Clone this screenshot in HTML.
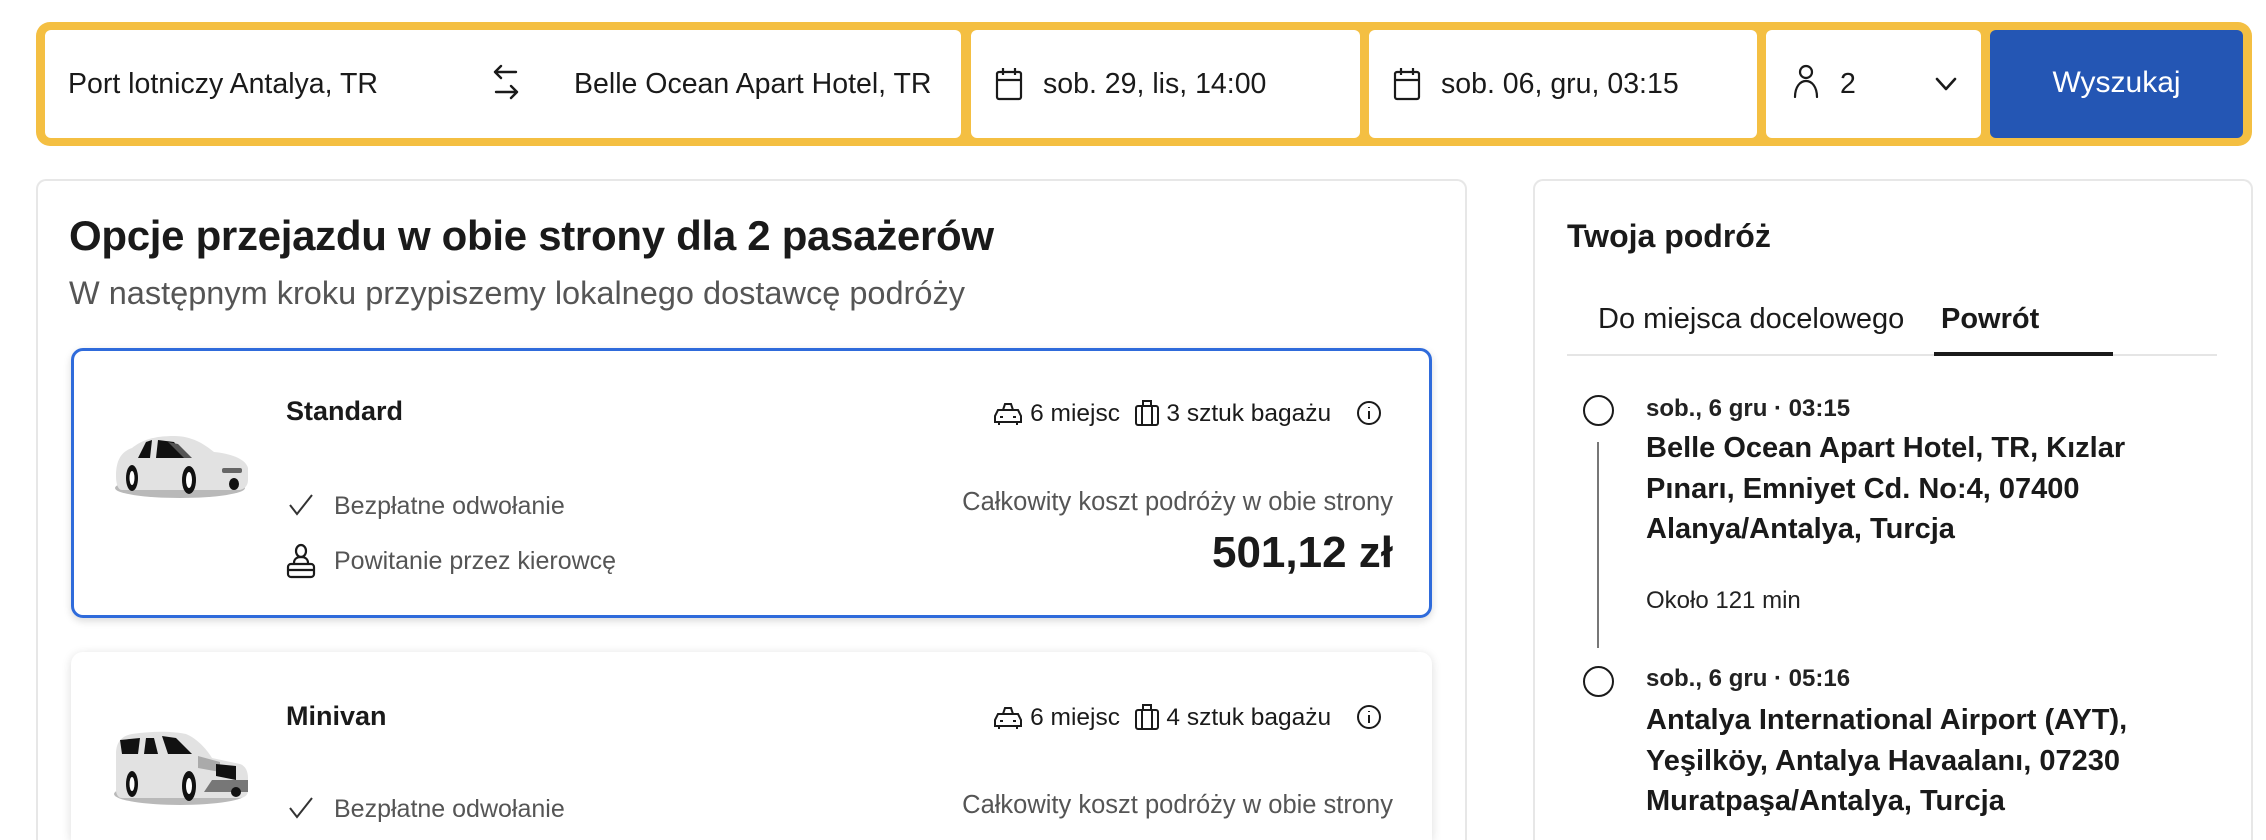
<!DOCTYPE html>
<html style="width:2266px;height:840px;overflow:hidden"><head><meta charset="utf-8"><style>
*{box-sizing:border-box;margin:0;padding:0}
body{width:2266px;height:840px;overflow:hidden;background:#fff;font-family:"Liberation Sans",Arial,sans-serif;color:#1a1a1a;position:relative}
.abs{position:absolute}
.bar{left:36px;top:22px;width:2216px;height:124px;background:#f4bf42;border-radius:14px}
.seg{position:absolute;top:8px;height:108px;background:#fff;border-radius:6px}
.t26{font-size:28.5px;line-height:32px;white-space:nowrap}
.card{border:2px solid #e7e7e7;border-bottom:none;border-radius:10px 10px 0 0}
.gray{color:#555}
.b{font-weight:bold}
</style></head><body>
<div class="abs bar">
  <div class="seg" style="left:9px;width:916px"></div>
  <div class="seg" style="left:935px;width:389px"></div>
  <div class="seg" style="left:1333px;width:388px"></div>
  <div class="seg" style="left:1730px;width:215px"></div>
  <div class="seg" style="left:1954px;width:253px;background:#2456b4"></div>
</div>
<div class="abs t26" style="left:68px;top:68px">Port lotniczy Antalya, TR</div>
<svg class="abs" style="left:490px;top:62px" width="32" height="42" viewBox="0 0 32 42" fill="none" stroke="#1a1a1a" stroke-width="2.4" stroke-linecap="round" stroke-linejoin="round"><path d="M26 10H5M11 4L5 10l6 6M6 30h21M21 24l6 6-6 6"/></svg>
<div class="abs t26" style="left:574px;top:68px">Belle Ocean Apart Hotel, TR</div>
<svg class="abs" style="left:995px;top:67px" width="28" height="34" viewBox="0 0 28 34" fill="none" stroke="#1a1a1a" stroke-width="2.2"><rect x="2" y="5" width="24" height="27" rx="2"/><path d="M2 13h24M8 1v7M20 1v7"/></svg>
<div class="abs t26" style="left:1043px;top:68px">sob. 29, lis, 14:00</div>
<svg class="abs" style="left:1393px;top:67px" width="28" height="34" viewBox="0 0 28 34" fill="none" stroke="#1a1a1a" stroke-width="2.2"><rect x="2" y="5" width="24" height="27" rx="2"/><path d="M2 13h24M8 1v7M20 1v7"/></svg>
<div class="abs t26" style="left:1441px;top:68px">sob. 06, gru, 03:15</div>
<svg class="abs" style="left:1792px;top:64px" width="28" height="34" viewBox="0 0 28 34" fill="none" stroke="#1a1a1a" stroke-width="2.2" stroke-linecap="round"><circle cx="14" cy="8" r="6"/><path d="M3 33c0-10 5-16 11-16s11 6 11 16"/></svg>
<div class="abs t26" style="left:1840px;top:68px">2</div>
<svg class="abs" style="left:1934px;top:76px" width="24" height="16" viewBox="0 0 24 16" fill="none" stroke="#1a1a1a" stroke-width="2.6" stroke-linecap="round" stroke-linejoin="round"><path d="M3 3l9 10 9-10"/></svg>
<div class="abs" style="left:1990px;top:66px;width:253px;text-align:center;color:#fff;font-size:30px">Wyszukaj</div>

<!-- left card -->
<div class="abs card" style="left:36px;top:179px;width:1431px;height:661px"></div>
<div class="abs b" style="left:69px;top:212px;font-size:42px;letter-spacing:-0.3px;white-space:nowrap">Opcje przejazdu w obie strony dla 2 pasażerów</div>
<div class="abs gray" style="left:69px;top:275px;font-size:32.5px;white-space:nowrap">W następnym kroku przypiszemy lokalnego dostawcę podróży</div>

<div class="abs" style="left:71px;top:348px;width:1361px;height:270px;border:3px solid #2f6bdb;border-radius:12px;box-shadow:0 3px 8px rgba(0,0,0,.15)"></div>
<div class="abs" style="left:71px;top:652px;width:1361px;height:188px;border-radius:12px 12px 0 0;box-shadow:0 2px 10px rgba(0,0,0,.14)"></div>

<!-- sedan -->
<svg class="abs" style="left:112px;top:428px" width="140" height="70" viewBox="0 0 140 70"><ellipse cx="68" cy="60" rx="65" ry="10" fill="#b9b9b9"/><path d="M4 48c0-14 4-24 16-28 10-8 22-12 42-12 18 0 30 8 40 16 20 2 32 8 34 16v12c0 6-4 10-10 10H10c-4 0-6-6-6-14z" fill="#e2e2e2"/><path d="M34 14l-8 16h12l2-18zM46 12l-2 18h30l-12-16z" fill="#111"/><path d="M56 14l16 16h8L66 16z" fill="#555"/><rect x="110" y="40" width="20" height="5" rx="2" fill="#666"/><ellipse cx="20" cy="50" rx="6" ry="13" fill="#111"/><ellipse cx="20" cy="50" rx="2.5" ry="7" fill="#fff"/><ellipse cx="77" cy="52" rx="7" ry="14" fill="#111"/><ellipse cx="77" cy="52" rx="3" ry="8" fill="#fff"/><ellipse cx="122" cy="56" rx="5" ry="6" fill="#111"/></svg>
<!-- minivan -->
<svg class="abs" style="left:112px;top:728px" width="140" height="78" viewBox="0 0 140 78"><ellipse cx="68" cy="66" rx="66" ry="11" fill="#b9b9b9"/><path d="M4 60V26c0-10 4-18 16-20 20-3 40-3 54 0 10 4 20 14 26 24l28 6c6 2 8 8 8 14v12c0 6-4 8-10 8H10c-4 0-6-4-6-8z" fill="#e2e2e2"/><path d="M8 12l2 14h16l2-16zM34 10l-2 16h14l-4-16zM50 8l6 18h24L64 10z" fill="#111"/><path d="M86 28l22 6v10l-22-4z" fill="#aaa"/><path d="M104 36l20 2v14l-20-4z" fill="#111"/><path d="M92 64l8-12h36v12z" fill="#777"/><ellipse cx="20" cy="56" rx="6" ry="13" fill="#111"/><ellipse cx="20" cy="56" rx="2.5" ry="7" fill="#fff"/><ellipse cx="77" cy="58" rx="7" ry="15" fill="#111"/><ellipse cx="77" cy="58" rx="3" ry="8" fill="#fff"/><ellipse cx="124" cy="64" rx="5" ry="5" fill="#111"/></svg>

<div class="abs b" style="left:286px;top:396px;font-size:27px">Standard</div>
<div class="abs b" style="left:286px;top:701px;font-size:27px">Minivan</div>

<!-- seats / luggage rows -->
<div class="abs" style="right:884px;top:399px;font-size:24.5px;line-height:28px;white-space:nowrap">
<svg width="30" height="26" viewBox="0 0 30 26" style="vertical-align:-5px" fill="none" stroke="#1a1a1a" stroke-width="2"><path d="M12 4h6l2 6H10zM5 10h20l3 6v6H2v-6zM6 22v3M24 22v3M7 17h3M20 17h3"/></svg> 6 miejsc&nbsp;
<svg width="26" height="28" viewBox="0 0 26 28" style="vertical-align:-6px" fill="none" stroke="#1a1a1a" stroke-width="2"><rect x="2" y="7" width="22" height="19" rx="2"/><path d="M9 7V2h8v5M8 7v19M18 7v19"/></svg> 3 sztuk bagażu
<svg width="26" height="26" viewBox="0 0 26 26" style="vertical-align:-5px;margin-left:18px" fill="none" stroke="#1a1a1a" stroke-width="2"><circle cx="13" cy="13" r="11"/><path d="M13 11v8M13 7v1"/></svg>
</div>
<div class="abs" style="right:884px;top:703px;font-size:24.5px;line-height:28px;white-space:nowrap">
<svg width="30" height="26" viewBox="0 0 30 26" style="vertical-align:-5px" fill="none" stroke="#1a1a1a" stroke-width="2"><path d="M12 4h6l2 6H10zM5 10h20l3 6v6H2v-6zM6 22v3M24 22v3M7 17h3M20 17h3"/></svg> 6 miejsc&nbsp;
<svg width="26" height="28" viewBox="0 0 26 28" style="vertical-align:-6px" fill="none" stroke="#1a1a1a" stroke-width="2"><rect x="2" y="7" width="22" height="19" rx="2"/><path d="M9 7V2h8v5M8 7v19M18 7v19"/></svg> 4 sztuk bagażu
<svg width="26" height="26" viewBox="0 0 26 26" style="vertical-align:-5px;margin-left:18px" fill="none" stroke="#1a1a1a" stroke-width="2"><circle cx="13" cy="13" r="11"/><path d="M13 11v8M13 7v1"/></svg>
</div>

<svg class="abs" style="left:288px;top:493px" width="26" height="24" viewBox="0 0 26 24" fill="none" stroke="#333" stroke-width="2"><path d="M2 12l7 9L24 2"/></svg>
<div class="abs gray" style="left:334px;top:492px;font-size:25px">Bezpłatne odwołanie</div>
<svg class="abs" style="left:286px;top:543px" width="30" height="36" viewBox="0 0 30 36" fill="none" stroke="#1a1a1a" stroke-width="2.2"><ellipse cx="15" cy="8" rx="5" ry="6"/><path d="M8 20c0-4 3-6 7-6s7 2 7 6"/><rect x="2" y="21" width="26" height="13" rx="3"/><path d="M2 27h26"/></svg>
<div class="abs gray" style="left:334px;top:547px;font-size:25px">Powitanie przez kierowcę</div>
<svg class="abs" style="left:288px;top:796px" width="26" height="24" viewBox="0 0 26 24" fill="none" stroke="#333" stroke-width="2"><path d="M2 12l7 9L24 2"/></svg>
<div class="abs gray" style="left:334px;top:795px;font-size:25px">Bezpłatne odwołanie</div>

<div class="abs gray" style="right:873px;top:488px;font-size:25.5px;white-space:nowrap">Całkowity koszt podróży w obie strony</div>
<div class="abs b" style="right:873px;top:528px;font-size:44px">501,12 zł</div>
<div class="abs gray" style="right:873px;top:791px;font-size:25.5px;white-space:nowrap">Całkowity koszt podróży w obie strony</div>

<!-- right card -->
<div class="abs card" style="left:1533px;top:179px;width:720px;height:661px"></div>
<div class="abs b" style="left:1567px;top:218px;font-size:32px">Twoja podróż</div>
<div class="abs" style="left:1598px;top:303px;font-size:29px;white-space:nowrap">Do miejsca docelowego</div>
<div class="abs b" style="left:1941px;top:303px;font-size:29px">Powrót</div>
<div class="abs" style="left:1567px;top:354px;width:650px;height:2px;background:#e5e5e5"></div>
<div class="abs" style="left:1934px;top:352px;width:179px;height:4px;background:#1a1a1a"></div>

<div class="abs" style="left:1583px;top:395px;width:31px;height:31px;border:2.5px solid #1a1a1a;border-radius:50%"></div>
<div class="abs" style="left:1597px;top:442px;width:2px;height:206px;background:#777"></div>
<div class="abs" style="left:1583px;top:666px;width:31px;height:31px;border:2.5px solid #1a1a1a;border-radius:50%"></div>

<div class="abs" style="left:1646px;top:395px;font-size:24px;font-weight:bold;color:#222;white-space:nowrap">sob., 6 gru · 03:15</div>
<div class="abs b" style="left:1646px;top:428px;font-size:29px;line-height:40.5px;width:620px;white-space:nowrap">Belle Ocean Apart Hotel, TR, Kızlar<br>Pınarı, Emniyet Cd. No:4, 07400<br>Alanya/Antalya, Turcja</div>
<div class="abs" style="left:1646px;top:587px;font-size:24px;color:#222">Około 121 min</div>
<div class="abs" style="left:1646px;top:665px;font-size:24px;font-weight:bold;color:#222;white-space:nowrap">sob., 6 gru · 05:16</div>
<div class="abs b" style="left:1646px;top:700px;font-size:29px;line-height:40.5px;width:620px;white-space:nowrap">Antalya International Airport (AYT),<br>Yeşilköy, Antalya Havaalanı, 07230<br>Muratpaşa/Antalya, Turcja</div>
</body></html>
